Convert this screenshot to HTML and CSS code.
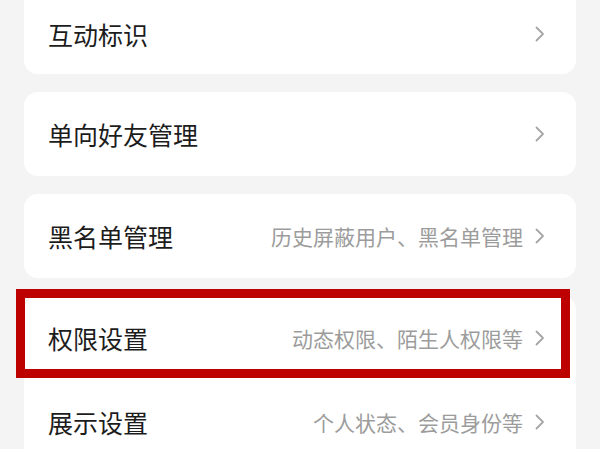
FILE: index.html
```html
<!DOCTYPE html>
<html>
<head>
    <meta http-equiv="Content-Type" content="text/html; charset=UTF-8">
    <title>隐私设置</title>
    <link rel="stylesheet" href="styles.css">
</head>
<body>
    <div class="list">
        <div class="card first">
            <div class="row">
                <div class="title">互动标识</div>
                <div class="extra">
                    <svg class="arrow" viewBox="0 0 10 16"><path d="M1.5 1.5 L8 8 L1.5 14.5"/></svg>
                </div>
            </div>
        </div>
        <div class="card">
            <div class="row">
                <div class="title">单向好友管理</div>
                <div class="extra">
                    <svg class="arrow" viewBox="0 0 10 16"><path d="M1.5 1.5 L8 8 L1.5 14.5"/></svg>
                </div>
            </div>
        </div>
        <div class="card">
            <div class="row">
                <div class="title">黑名单管理</div>
                <div class="extra">
                    <span class="desc">历史屏蔽用户、黑名单管理</span>
                    <svg class="arrow" viewBox="0 0 10 16"><path d="M1.5 1.5 L8 8 L1.5 14.5"/></svg>
                </div>
            </div>
        </div>
        <div class="card">
            <div class="row marked">
                <div class="title">权限设置</div>
                <div class="extra">
                    <span class="desc">动态权限、陌生人权限等</span>
                    <svg class="arrow" viewBox="0 0 10 16"><path d="M1.5 1.5 L8 8 L1.5 14.5"/></svg>
                </div>
                <div class="highlight"></div>
            </div>
            <div class="row">
                <div class="title">展示设置</div>
                <div class="extra">
                    <span class="desc">个人状态、会员身份等</span>
                    <svg class="arrow" viewBox="0 0 10 16"><path d="M1.5 1.5 L8 8 L1.5 14.5"/></svg>
                </div>
            </div>
        </div>
    </div>
</body>
</html>
```

FILE: styles.css
```css
body {
    margin: 0;
    background: #f4f4f4;
    font-family: "Noto Sans CJK SC", "Noto Sans", sans-serif;
    overflow: hidden;
}

.list {
    display: flex;
    flex-direction: column;
    gap: 18px;
    padding: 0 24px;
    margin-top: -10px;
}

.card {
    background: #fff;
    border-radius: 14px;
}

.row {
    position: relative;
    display: flex;
    align-items: center;
    justify-content: space-between;
    height: 84px;
    padding: 0 31px 0 24px;
}

.card.first .row {
    padding-top: 4px;
    height: 80px;
}

.title {
    font-size: 25px;
    color: #1c1c1c;
}

.extra {
    display: flex;
    align-items: center;
    gap: 12px;
}

.desc {
    font-size: 21px;
    color: #9c9c9c;
}

.arrow {
    width: 10px;
    height: 16px;
}

.arrow path {
    fill: none;
    stroke: #a6a6a6;
    stroke-width: 1.8;
    stroke-linecap: round;
    stroke-linejoin: round;
}

.highlight {
    position: absolute;
    left: -8px;
    top: -7px;
    width: 536px;
    height: 71px;
    border: 9px solid #bd0000;
}
```
